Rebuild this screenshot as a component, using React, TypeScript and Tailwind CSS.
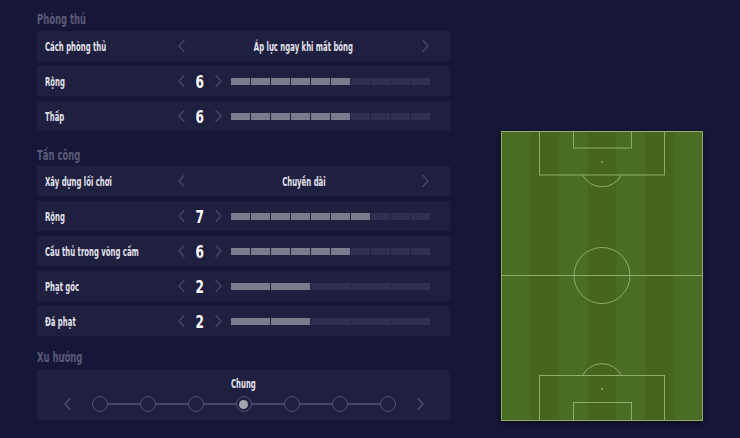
import type { ReactNode } from "react";

// dữ liệu chiến thuật
const DEFENCE = [
  { label: "Cách phòng thủ", type: "select", text: "Áp lực ngay khi mất bóng" },
  { label: "Rộng", type: "slider", value: 6, max: 10 },
  { label: "Thấp", type: "slider", value: 6, max: 10 },
];

const ATTACK = [
  { label: "Xây dựng lối chơi", type: "select", text: "Chuyền dài" },
  { label: "Rộng", type: "slider", value: 7, max: 10 },
  { label: "Cầu thủ trong vòng cấm", type: "slider", value: 6, max: 10 },
  { label: "Phạt góc", type: "slider", value: 2, max: 5 },
  { label: "Đá phạt", type: "slider", value: 2, max: 5 },
];

const FONT = "font-['Liberation_Sans_Narrow','DejaVu_Sans_Condensed',sans-serif]";

function Chevron({ dir, color = "#45456a" }: { dir: "left" | "right"; color?: string }) {
  return (
    <svg viewBox="0 0 16 16" className="w-4 h-4 shrink-0" fill="none">
      <path
        d={dir === "left" ? "M10 2.5 5 8l5 5.5" : "M6 2.5 11 8l-5 5.5"}
        stroke={color}
        strokeWidth="1.5"
        strokeLinecap="round"
        strokeLinejoin="round"
      />
    </svg>
  );
}

function Header({ children, className = "" }: { children: ReactNode; className?: string }) {
  return (
    <div className={`h-[20px] leading-[20px] text-[14px] font-bold text-[#5b5b78] ${className}`}>
      <span className="inline-block whitespace-nowrap scale-x-67 origin-left">{children}</span>
    </div>
  );
}

type Item = { label: string; type: string; text?: string; value?: number; max?: number };

function Row({ item }: { item: Item }) {
  return (
    <div className="h-[30px] bg-[#1f1f40] flex items-center">
      <div className="w-[137px] pl-[8px] pt-[2px] text-[12px] font-bold text-[#e3e3ec] whitespace-nowrap">
        <span className="inline-block scale-x-64 origin-left">{item.label}</span>
      </div>
      {item.type === "select" ? (
        <div className="flex-1 flex items-center pr-[17px]">
          <Chevron dir="left" />
          <div className="flex-1 pt-[2px] text-center text-[12px] font-bold text-[#e3e3ec] whitespace-nowrap">
            <span className="inline-block scale-x-64 origin-center">{item.text}</span>
          </div>
          <Chevron dir="right" />
        </div>
      ) : (
        <div className="flex items-center">
          <Chevron dir="left" />
          <div className="w-[20px] text-center text-[18px] font-bold text-white leading-none pt-[1px]">
            <span className="inline-block scale-x-75 origin-center">{item.value}</span>
          </div>
          <Chevron dir="right" />
          <div className="ml-[5px] w-[199px] flex gap-[1.5px]">
            {Array.from({ length: item.max ?? 10 }).map((_, i) => (
              <div
                key={i}
                className={`flex-1 h-[7px] ${i < (item.value ?? 0) ? "bg-[#7b7b8c]" : "bg-[#303050]"}`}
              />
            ))}
          </div>
        </div>
      )}
    </div>
  );
}

function Pitch() {
  const line = "#8fae6c";
  return (
    <svg viewBox="0 0 202 290" className="w-[202px] h-[290px] shadow-[0_2px_4px_rgba(0,0,0,0.5)]">
      <rect x="0" y="0" width="202" height="290" fill="#46651f" />
      {[0, 2, 4, 6].map((i) => (
        <rect key={i} x={i * 28.86} y={0} width={28.86} height={290} fill="#4b6c25" />
      ))}
      <g stroke={line} strokeWidth="1" fill="none">
        <rect x="0.5" y="0.5" width="201" height="289" />
        <line x1="0" y1="144.5" x2="202" y2="144.5" />
        <circle cx="101" cy="144.5" r="28" />
        {/* khung thành trên */}
        <rect x="38.5" y="0.5" width="125" height="43.5" />
        <rect x="72.5" y="0.5" width="58" height="16.5" />
        <path d="M81.5 44 A 22 22 0 0 0 120.5 44" />
        {/* khung thành dưới */}
        <rect x="38.5" y="244.5" width="125" height="45" />
        <rect x="72.5" y="271.5" width="58" height="18" />
        <path d="M81.5 244.5 A 22 22 0 0 1 120.5 244.5" />
      </g>
      <circle cx="101" cy="31" r="1" fill={line} />
      <circle cx="101" cy="258" r="1" fill={line} />
    </svg>
  );
}

function Tendency() {
  const dots = [0, 1, 2, 3, 4, 5, 6];
  return (
    <div className="h-[50px] bg-[#1f1f40] flex flex-col items-center pt-[5px]">
      <div className="text-[12px] font-bold text-[#e3e3ec] leading-[18px]">
        <span className="inline-block scale-x-64 origin-center">Chung</span>
      </div>
      <div className="flex items-center mt-[3px]">
        <Chevron dir="left" color="#50506e" />
        <div className="w-[16px]" />
        {dots.map((d) => (
          <div key={d} className="flex items-center">
            {d > 0 && <div className="w-[32px] h-[1.5px] bg-[#4a4a68]" />}
            <div className="w-[16px] h-[16px] rounded-full border-[1.5px] border-[#50506e] flex items-center justify-center">
              {d === 3 && <div className="w-[9px] h-[9px] rounded-full bg-[#a3a3ad]" />}
            </div>
          </div>
        ))}
        <div className="w-[16px]" />
        <Chevron dir="right" color="#50506e" />
      </div>
    </div>
  );
}

export default function App() {
  return (
    <div className={`w-[740px] h-[438px] bg-[#161638] flex overflow-hidden ${FONT}`}>
      <div className="w-[413px] ml-[37px] pt-[9px]">
        <Header>Phòng thủ</Header>
        <div className="mt-[2px] flex flex-col gap-[5px]">
          {DEFENCE.map((it, i) => (
            <Row key={i} item={it} />
          ))}
        </div>
        <Header className="mt-[14px] mb-[1px]">Tấn công</Header>
        <div className="flex flex-col gap-[5px]">
          {ATTACK.map((it, i) => (
            <Row key={i} item={it} />
          ))}
        </div>
        <Header className="mt-[11px] mb-[3px]">Xu hướng</Header>
        <Tendency />
      </div>
      <div className="ml-[51px] mt-[131px]">
        <Pitch />
      </div>
    </div>
  );
}
